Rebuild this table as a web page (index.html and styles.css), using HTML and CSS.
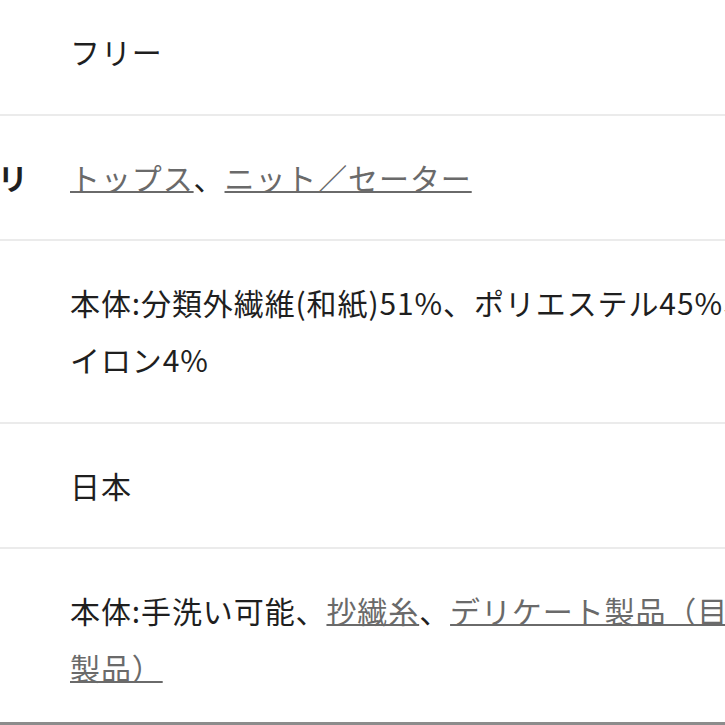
FILE: index.html
```html
<!DOCTYPE html>
<html lang="ja">

<head>
    <meta charset="UTF-8">
    <meta name="viewport" content="width=device-width, initial-scale=1.0">
    <title>商品詳細</title>

    <link rel="stylesheet" href="styles.css">
</head>

<body>

    <main class="sheet">
        <dl class="spec">
            <div class="spec--row">
                <dt>サイズ</dt>
                <dd>フリー</dd>
            </div>
            <div class="spec--row">
                <dt>カテゴリ</dt>
                <dd>
                    <a href="javascript:;">トップス</a>、<a href="javascript:;">ニット／セーター</a>
                </dd>
            </div>
            <div class="spec--row">
                <dt>素材</dt>
                <dd>本体:分類外繊維(和紙)51%、ポリエステル45%、ナイロン4%</dd>
            </div>
            <div class="spec--row">
                <dt>原産国</dt>
                <dd>日本</dd>
            </div>
            <div class="spec--row spec--row-care">
                <dt>取扱い</dt>
                <dd>
                    本体:手洗い可能、<a href="javascript:;">抄繊糸</a>、<a href="javascript:;">デリケート製品（目の粗い製品）</a>
                </dd>
            </div>
        </dl>
    </main>

</body>

</html>
```

FILE: styles.css
```css
/* Variables */
:root {
    --color-text: #1f1f1f;
    --color-link: #6a6a6a;
    --color-line: #ebebeb;
    --color-edge: #8c8c8c;
}

/* Base */
html,
body {
    margin: 0;
    background-color: #ffffff;
    overflow: hidden;
}

a {
    color: var(--color-link);
    text-decoration: underline;
    text-decoration-thickness: 2px;
    text-underline-offset: 1px;
}

/* Sheet */
.sheet {
    display: block;
    height: 722px;
    overflow: hidden;
    border-bottom: 3px solid var(--color-edge);
}

.spec {
    margin: -10px 0 0 -95px;
    font-family: "Noto Sans CJK JP", "Noto Sans", sans-serif;
    font-size: 30px;
    line-height: 57px;
    letter-spacing: 0.9px;
    color: var(--color-text);
}

.spec--row {
    display: grid;
    grid-template-columns: 165px 740px;
    padding: 33.25px 0;
    border-bottom: 2px solid var(--color-line);
}

.spec--row dt {
    font-weight: 700;
    white-space: nowrap;
}

.spec--row dd {
    margin: 0;
}

.spec--row-care dd {
    margin-right: -16px;
}
```
